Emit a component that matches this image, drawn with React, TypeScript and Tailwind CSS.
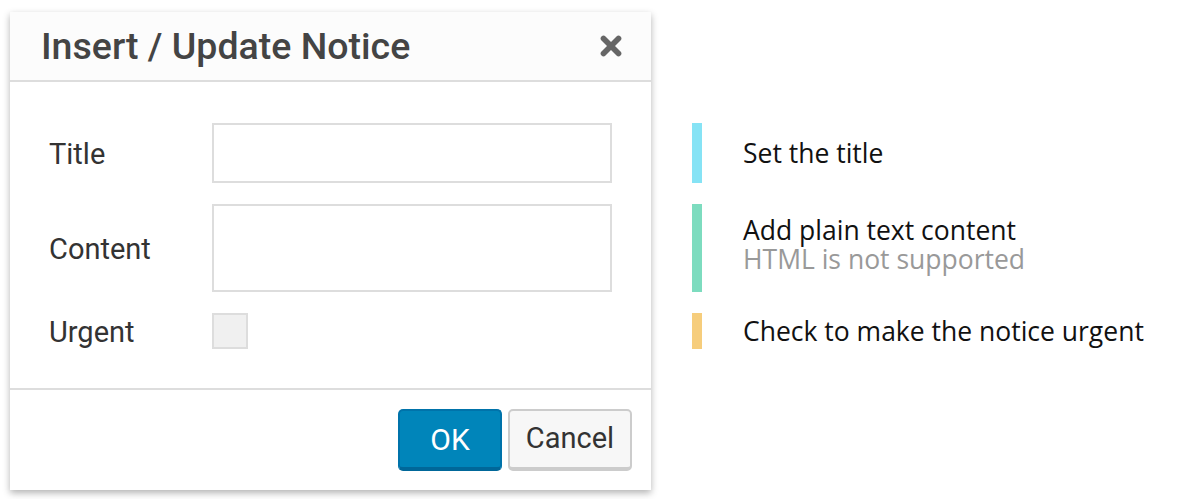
import { X } from 'lucide-react';

const ROWS = [
  { label: 'Title', kind: 'input', bar: 'bg-[#86e3f5]', text: 'Set the title' },
  { label: 'Content', kind: 'textarea', bar: 'bg-[#7ddcbf]', text: 'Add plain text content', sub: 'HTML is not supported' },
  { label: 'Urgent', kind: 'checkbox', bar: 'bg-[#f6cd7c]', text: 'Check to make the notice urgent' },
] as const;

export default function App() {
  return (
    <div className="flex h-[499px] w-[1200px] bg-white pl-[10px] pt-[12px]">
      {/* Dialog */}
      <div className="flex h-[478px] w-[641px] flex-col bg-white shadow-[0_3px_7px_rgba(0,0,0,0.3)] font-['Roboto',sans-serif]">
        <div className="flex h-[70px] items-center justify-between border-b-2 border-[#dddddd] bg-[#fcfcfc] pl-[31px] pr-[25px]">
          <h1 className="text-[37.5px] font-medium text-[#444444]">Insert / Update Notice</h1>
          <X className="h-[30px] w-[30px] text-[#666666]" strokeWidth={4.5} />
        </div>

        <div className="flex flex-1 flex-col gap-[21px] pl-[39px] pr-[39px] pt-[41px]">
          <div className="flex h-[60px] items-center">
            <span className="w-[163px] pt-[3px] text-[29px] text-[#333333]">Title</span>
            <div className="h-[60px] flex-1 border-2 border-[#dddddd] bg-white" />
          </div>
          <div className="flex h-[88px] items-center">
            <span className="w-[163px] pt-[3px] text-[29px] text-[#333333]">Content</span>
            <div className="h-[88px] flex-1 border-2 border-[#dddddd] bg-white" />
          </div>
          <div className="flex h-[36px] items-center">
            <span className="w-[163px] pt-[3px] text-[29px] text-[#333333]">Urgent</span>
            <div className="h-[36px] w-[36px] border-2 border-[#dddddd] bg-[#f0f0f0]" />
          </div>
        </div>

        <div className="flex h-[102px] items-start justify-end gap-[6px] border-t-2 border-[#dddddd] pr-[19px] pt-[19px]">
          <button className="h-[62px] w-[104px] rounded-[5px] border-2 border-b-4 border-[#0073aa] border-b-[#006799] bg-[#0085ba] text-[30px] text-white">
            OK
          </button>
          <button className="h-[62px] w-[124px] rounded-[5px] border-2 border-b-4 border-[#cccccc] bg-[#f7f7f7] text-[29px] text-[#333333]">
            Cancel
          </button>
        </div>
      </div>

      {/* Annotations */}
      <div className="ml-[41px] flex flex-col gap-[21px] pt-[111px] font-['Open_Sans',sans-serif]">
        {ROWS.map((row) => (
          <div
            key={row.label}
            className={`flex ${row.kind === 'input' ? 'h-[60px] items-center' : row.kind === 'textarea' ? 'h-[88px] items-start' : 'h-[36px] items-center'}`}
          >
            <div className={`h-full w-[10px] ${row.bar}`} />
            <div className={`ml-[41px] leading-[29px] ${row.kind === 'textarea' ? 'pt-[12px]' : ''}`}>
              <div className="text-[26.5px] text-[#111111]">{row.text}</div>
              {'sub' in row && <div className="text-[26.5px] text-[#999999]">{row.sub}</div>}
            </div>
          </div>
        ))}
      </div>
    </div>
  );
}
